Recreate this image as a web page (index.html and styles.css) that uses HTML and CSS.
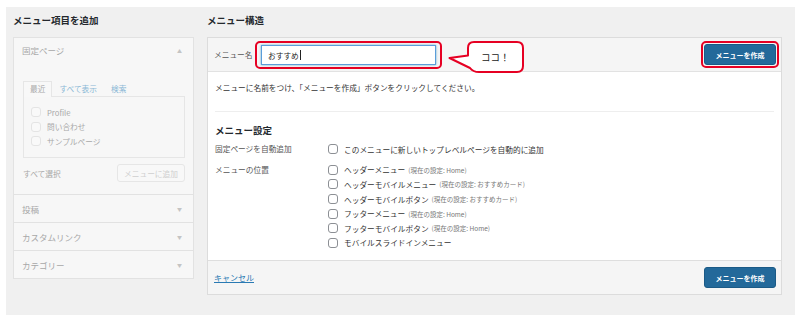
FILE: index.html
```html
<!DOCTYPE html>
<html>
    <head>
        <meta charset="UTF-8">
        <title>メニュー構造</title>
        <link rel="stylesheet" href="styles.css">
    </head>
    <body>
        <div class="wrap">
            <div class="col-left">
                <h2 class="col-title">メニュー項目を追加</h2>
                <div class="accordion">
                    <div class="acc-head">
                        <span>固定ページ</span>
                        <span class="arrow">&#9650;</span>
                    </div>
                    <div class="acc-body">
                        <div class="tabs">
                            <span class="tab active">最近</span>
                            <span class="tab">すべて表示</span>
                            <span class="tab">検索</span>
                        </div>
                        <div class="tab-panel">
                            <label class="item"><span class="box"></span>Profile</label>
                            <label class="item"><span class="box"></span>問い合わせ</label>
                            <label class="item"><span class="box"></span>サンプルページ</label>
                        </div>
                        <div class="select-row">
                            <span>すべて選択</span>
                            <span class="btn-ghost">メニューに追加</span>
                        </div>
                    </div>
                    <div class="acc-row"><span>投稿</span><span class="arrow">&#9660;</span></div>
                    <div class="acc-row"><span>カスタムリンク</span><span class="arrow">&#9660;</span></div>
                    <div class="acc-row"><span>カテゴリー</span><span class="arrow">&#9660;</span></div>
                </div>
            </div>

            <div class="col-right">
                <h2 class="col-title">メニュー構造</h2>
                <div class="menu-box">
                    <div class="menu-head">
                        <span class="name-label">メニュー名</span>
                        <span class="hl hl-input">
                            <span class="name-input">おすすめ<span class="caret"></span></span>
                        </span>
                        <div class="bubble">
                            <svg class="bubble-bg" width="77" height="32" viewBox="0 0 77 32">
                                <path d="M26 1 H69 Q75 1 75 7 V25 Q75 31 69 31 H31 Q25 31 22 27 L1.5 17 L20 14.5 V7 Q20 1 26 1 Z" fill="#fff" stroke="#e60023" stroke-width="2" stroke-linejoin="round"/>
                            </svg>
                            <span class="bubble-text">ココ！</span>
                        </div>
                        <span class="hl hl-btn">
                            <span class="btn-primary">メニューを作成</span>
                        </span>
                    </div>
                    <div class="menu-body">
                        <p class="hint">メニューに名前をつけ、「メニューを作成」ボタンをクリックしてください。</p>
                        <div class="divider"></div>
                        <h3 class="sub-title">メニュー設定</h3>
                        <div class="set-row">
                            <div class="set-label">固定ページを自動追加</div>
                            <div class="set-opts">
                                <div class="opt"><span class="check"></span>このメニューに新しいトップレベルページを自動的に追加</div>
                            </div>
                        </div>
                        <div class="set-row group2">
                            <div class="set-label">メニューの位置</div>
                            <div class="set-opts">
                                <div class="opt"><span class="check"></span>ヘッダーメニュー<small>(現在の設定: Home)</small></div>
                                <div class="opt"><span class="check"></span>ヘッダーモバイルメニュー<small>(現在の設定: おすすめカード)</small></div>
                                <div class="opt"><span class="check"></span>ヘッダーモバイルボタン<small>(現在の設定: おすすめカード)</small></div>
                                <div class="opt"><span class="check"></span>フッターメニュー<small>(現在の設定: Home)</small></div>
                                <div class="opt"><span class="check"></span>フッターモバイルボタン<small>(現在の設定: Home)</small></div>
                                <div class="opt"><span class="check"></span>モバイルスライドインメニュー</div>
                            </div>
                        </div>
                    </div>
                    <div class="menu-foot">
                        <a class="cancel" href="#">キャンセル</a>
                        <span class="btn-primary">メニューを作成</span>
                    </div>
                </div>
            </div>
        </div>
    </body>
</html>
```

FILE: styles.css
```css
body {
    margin: 0;
    background: #fff;
    font-family: "Noto Sans CJK JP", "Noto Sans", sans-serif;
    color: #333;
}

.wrap {
    margin: 7px 0 0 6px;
    width: 789px;
    height: 308px;
    box-sizing: border-box;
    padding: 7px 13px 0 7px;
    background: #f0f0f0;
    display: flex;
    gap: 13px;
}

.col-title {
    margin: 0 0 10px;
    font-size: 9.5px;
    line-height: 13px;
    font-weight: bold;
    color: #23282d;
}

/* left column */
.col-left {
    width: 181px;
}

.accordion {
    border: 1px solid #e2e2e2;
    background: #f7f7f7;
    color: #a8a8a8;
    font-size: 7.7px;
}

.acc-head, .acc-row {
    display: flex;
    justify-content: space-between;
    align-items: center;
    padding: 0 11px 0 8px;
}

.acc-head {
    height: 25px;
    font-size: 8.5px;
    line-height: 25px;
}

.acc-row {
    height: 27px;
    border-top: 1px solid #e2e2e2;
    font-size: 8.5px;
}

.arrow {
    font-size: 5px;
    color: #c4c4c4;
}

.acc-body {
    padding: 18px 8px 12px 9px;
}

.tabs {
    display: flex;
    align-items: flex-end;
    height: 15px;
}

.tab {
    padding: 0 7px;
    line-height: 14px;
    color: #8bb7d6;
}

.tab.active {
    color: #aaa;
    border: 1px solid #e6e6e6;
    border-bottom: none;
    background: #f8f8f8;
    margin-bottom: -1px;
    padding: 0 6px 1px;
}

.tab-panel {
    border: 1px solid #e6e6e6;
    background: #f7f7f7;
    height: 62px;
    box-sizing: border-box;
    padding: 8px 0 0 7px;
}

.item {
    display: flex;
    align-items: center;
    height: 14.5px;
    gap: 6px;
}

.box {
    width: 10px;
    height: 10px;
    border: 1px solid #e4e4e4;
    border-radius: 3px;
    background: #f9f9f9;
    box-sizing: border-box;
}

.select-row {
    margin-top: 6px;
    display: flex;
    justify-content: space-between;
    align-items: center;
}

.btn-ghost {
    width: 68px;
    height: 18px;
    box-sizing: border-box;
    border: 1px solid #e6e6e6;
    border-radius: 3px;
    background: #f8f8f8;
    color: #cfcfcf;
    display: flex;
    justify-content: center;
    align-items: center;
}

/* right column */
.col-right {
    width: 575px;
}

.menu-box {
    border: 1px solid #dcdcdc;
    background: #fff;
    font-size: 7.7px;
}

.menu-head {
    height: 33px;
    background: #f5f5f5;
    border-bottom: 1px solid #e2e2e2;
    display: flex;
    align-items: center;
    padding: 0 2px 0 6px;
}

.name-label {
    color: #555;
    width: 41px;
}

.hl {
    border: 2px solid #e60023;
    border-radius: 5px;
    display: flex;
}

.hl-input {
    padding: 2px 4px;
    margin-top: 1px;
}

.name-input {
    width: 175px;
    height: 20px;
    box-sizing: border-box;
    border: 1px solid #5b9dd9;
    box-shadow: 0 0 2px rgba(30, 140, 190, 0.7);
    background: #fff;
    display: flex;
    align-items: center;
    padding-left: 6px;
    color: #222;
}

.caret {
    width: 1px;
    height: 10px;
    background: #222;
    margin-left: 1px;
}

.bubble {
    position: relative;
    width: 77px;
    height: 32px;
    margin-left: 6px;
    margin-top: 4px;
    display: flex;
    align-items: center;
}

.bubble-bg {
    position: absolute;
    left: 0;
    top: 0;
}

.bubble-text {
    position: relative;
    padding-left: 33px;
    font-size: 9.5px;
    color: #222;
}

.hl-btn {
    margin-left: auto;
    padding: 1px;
}

.btn-primary {
    width: 72px;
    height: 21px;
    box-sizing: border-box;
    background: #23699a;
    border: 1px solid #1b5a86;
    border-radius: 3px;
    color: #fff;
    font-weight: bold;
    font-size: 7px;
    display: flex;
    justify-content: center;
    align-items: center;
}

.menu-body {
    padding: 10px 7px 10px;
    color: #333;
}

.hint {
    margin: 0;
    line-height: 12px;
}

.divider {
    margin-top: 17px;
    border-top: 1px solid #eee;
}

.sub-title {
    margin: 11px 0 5px;
    font-size: 9.5px;
    line-height: 14px;
    font-weight: bold;
    color: #23282d;
}

.set-row {
    display: flex;
}

.group2 {
    margin-top: 6px;
}

.set-label {
    width: 113px;
    line-height: 14.6px;
    color: #555;
}

.opt {
    display: flex;
    align-items: center;
    height: 14.6px;
    color: #333;
}

.check {
    width: 10px;
    height: 10px;
    box-sizing: border-box;
    border: 1px solid #8c8f94;
    border-radius: 3px;
    margin-right: 6px;
}

.opt small {
    font-size: 6.5px;
    color: #777;
    margin-left: 3px;
}

.menu-foot {
    height: 33px;
    border-top: 1px solid #dedede;
    background: #f5f5f5;
    display: flex;
    justify-content: space-between;
    align-items: center;
    padding: 0 5px 0 6px;
}

.cancel {
    color: #2a7ab3;
    text-decoration: underline;
    font-size: 8px;
}
```
